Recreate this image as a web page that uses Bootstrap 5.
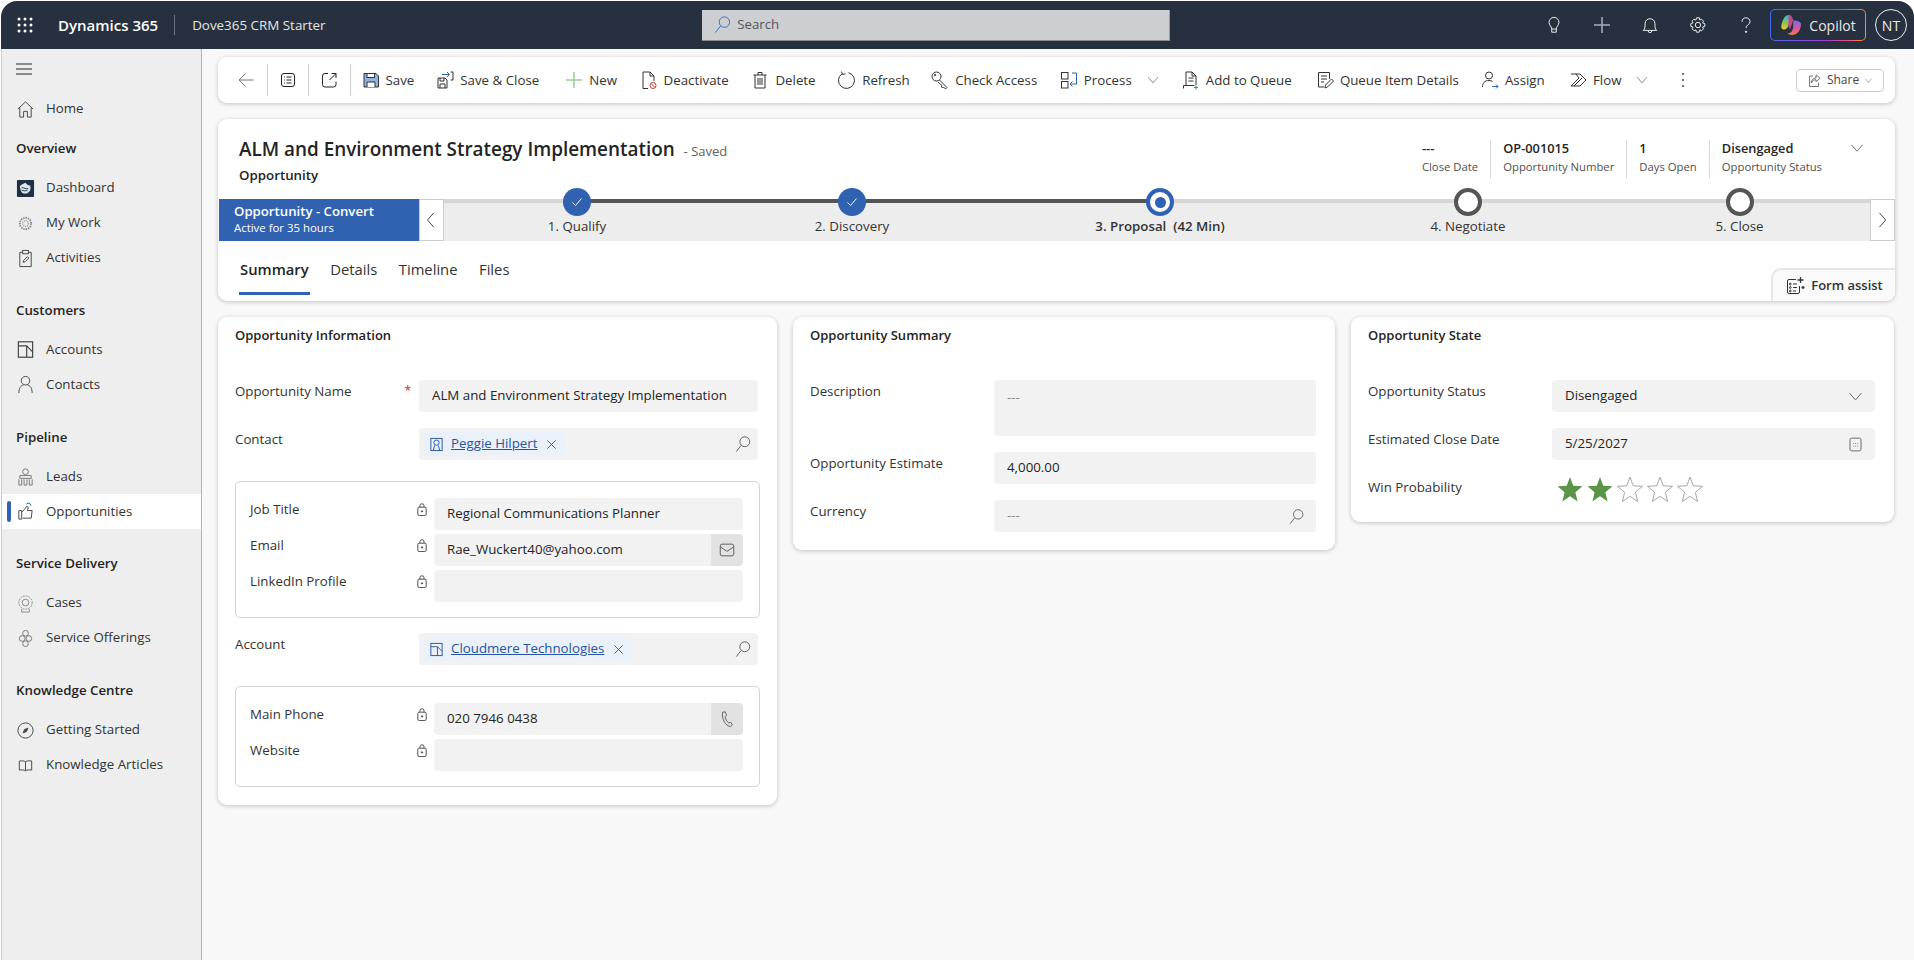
<!DOCTYPE html>
<html lang="en">
<head>
  <meta charset="UTF-8" />
  <title>Dynamics 365</title>
  <link href="https://cdn.jsdelivr.net/npm/bootstrap@5.3.0/dist/css/bootstrap.min.css" rel="stylesheet">
  <style>
    html, body { height: 100%; }
    body {
      background: #fff;
      overflow: hidden;
      font-family: "Open Sans", "Noto Sans", sans-serif;
      font-size: 13.3px;
      color: #242424;
    }
    .ic { width: 20px; height: 20px; flex: none; fill: none; stroke: currentColor; stroke-width: 1; }

    .app-win { height: 100vh; padding: 1px 0 0 1px; display: flex; flex-direction: column; }

    /* top bar */
    .top-bar {
      height: 48px; padding: 0; flex: none; flex-wrap: nowrap; justify-content: flex-start;
      background: #26303e; border-radius: 16px 16px 0 0; color: #fff;
    }
    .waffle { width: 48px; display: flex; justify-content: center; margin-right: 9px; }
    .app-name { font-size: 15px; font-weight: 600; padding-right: 16px; border-right: 1px solid #6b7480; line-height: 20px; }
    .env-name { font-size: 13.4px; color: #e6e6e6; padding-left: 17px; width: 527px; }
    .top-search {
      width: 468px; height: 31px; background: #cdced2; border-bottom: 1px solid #8a8c90; border-right: 1px solid #9a9ca0;
      color: #555; display: flex; align-items: center; gap: 5px; padding-left: 11px;
    }
    .top-search .ic { color: #3b6db5; width: 19px; height: 19px; }
    .top-icons { display: flex; margin-left: auto; align-items: center; }
    .top-icon { width: 48px; display: flex; justify-content: center; color: #fff; }
    .top-icon.dim { color: #aab0b8; }
    .top-icon .ic { width: 18px; height: 18px; }
    .copilot-btn {
      width: 96px; height: 32px; margin: 0 9px 0 0; padding: 0; border: 1px solid transparent; border-radius: 5px;
      background: linear-gradient(#26303e, #26303e) padding-box, linear-gradient(100deg, #3f6ff0, #a040d8 60%, #ee5a80 85%, #f59a2a) border-box;
      color: #e8e8e8; display: flex; align-items: center; justify-content: center; gap: 7px; font-size: 14px;
    }
    .me-circle {
      width: 32px; height: 32px; border: 1px solid #eee; border-radius: 50%; margin-right: 7px;
      display: flex; align-items: center; justify-content: center; font-size: 14px; color: #eee;
    }

    /* sidebar */
    .shell { flex: 1; display: flex; min-height: 0; }
    .side-nav { width: 201px; flex: none; background: #eee; border-left: 1px solid #ccc; border-right: 1px solid #b4b4b4; }
    .side-burger { height: 30px; margin: 5px 0 7.5px; padding-left: 14px; display: flex; align-items: center; }
    .side-item {
      height: 35px; display: flex; align-items: center; gap: 11px; padding-left: 14px; color: #333; position: relative; text-decoration: none;
    }
    .side-item .ic { width: 19px; height: 19px; color: #444; }
    .side-item.active { background: #fff; }
    .side-item.active::before {
      content: ""; position: absolute; left: 5px; top: 7px; width: 4px; height: 21px; border-radius: 2px; background: #3162b2;
    }
    .side-head { height: 35px; display: flex; align-items: center; padding-left: 14px; font-weight: 600; color: #242424; margin-bottom: 4px; }
    .side-head.gap { margin-top: 17.75px; }
    .side-head.first { margin-top: 5px; }

    /* main */
    .main-area { flex: 1; background: #f8f8f8; padding: 8px 19px 0 16px; min-width: 0; }
    .panel { border: 0; border-radius: 9px; box-shadow: 0 1px 4px rgba(0,0,0,.22); background: #fff; }
    .cmd-bar { height: 46px; display: flex; align-items: center; padding-left: 8px; margin-bottom: 16px; }
    .cmd-cell { width: 41.5px; height: 32px; display: flex; align-items: center; justify-content: center; border-right: 1px solid #ccc; }
    .cmd-btn {
      display: inline-flex; align-items: center; gap: 5px; padding: 0 10.5px; border: 0; border-radius: 0;
      font-size: 13.3px; color: #333; white-space: nowrap; line-height: 20px;
    }
    .cmd-chev { color: #555; margin-left: 9px; width: 14px; height: 14px; }
    .cmd-first { padding-left: 10px; }
    .cmd-bar > :nth-child(6) { margin-left: 4px; }
    .cmd-bar > :nth-child(7) { margin-left: .6px; }
    .cmd-bar > :nth-child(8) { margin-left: .6px; }
    .cmd-bar > :nth-child(9) { margin-left: .6px; }
    .cmd-bar > :nth-child(10) { margin-left: -.6px; }
    .cmd-bar > :nth-child(11) { margin-left: .6px; }
    .cmd-bar > :nth-child(13) { margin-left: 2.2px; }
    .cmd-bar > :nth-child(15) { margin-left: 2.2px; }
    .cmd-bar > :nth-child(16) { margin-left: 3px; }
    .share-btn {
      margin-left: auto !important; margin-right: 11px; width: 88px; height: 23px; padding: 0; border: 1px solid #ccc; border-radius: 4px;
      display: flex; align-items: center; justify-content: center; gap: 5px; font-size: 12px; color: #444;
    }

    /* record header */
    .rec-head { height: 182px; margin-bottom: 16px; overflow: hidden; }
    .rec-top { height: 80px; display: flex; justify-content: space-between; }
    .rec-title { padding: 16px 0 0 21px; }
    .rec-title h1 { font-size: 18.9px; font-weight: 600; line-height: 28px; margin: 0; }
    .rec-title h1 span { font-size: 13px; font-weight: 400; color: #616161; margin-left: 4px; }
    .rec-title div { font-weight: 600; line-height: 20px; }
    .stat-row { display: flex; padding: 21px 30px 0 0; }
    .stat-box { height: 38px; padding: 0 12px; border-left: 1px solid #d8d8d8; }
    .stat-box:first-child { border-left: 0; }
    .stat-val { font-weight: 600; font-size: 12.8px; line-height: 17px; }
    .stat-lab { font-size: 11.3px; color: #505050; line-height: 20px; }
    .stat-chev { width: 16px; height: 16px; margin: 0 0 0 15px; color: #555; }

    .bpf-band { height: 42px; display: flex; background: #ededed; margin-left: 1px; }
    .bpf-stage { width: 200px; background: #3162b2; color: #fff; padding: 3px 0 0 15px; }
    .bpf-stage b { display: block; font-weight: 600; font-size: 13.2px; line-height: 18px; }
    .bpf-stage small { display: block; font-size: 11.4px; line-height: 16px; }
    .bpf-nav { width: 25px; background: #fff; border: 1px solid #ccc; display: flex; align-items: center; justify-content: center; color: #333; flex: none; }
    .bpf-nav .ic { width: 18px; height: 18px; }
    .bpf-track { flex: 1; position: relative; display: grid; grid-template-columns: 266px 284px 332px 284px 259px; }
    .bpf-line { position: absolute; top: 0; height: 4px; background: #d6d6d6; left: 0; right: 0; }
    .bpf-line.done { left: 133px; width: 583px; right: auto; background: #555; }
    .bpf-step { position: relative; display: flex; flex-direction: column; align-items: center; margin-top: -11px; color: #333; }
    .bpf-step span { line-height: 20px; }
    .bpf-dot { width: 28px; height: 28px; border-radius: 50%; background: #fff; border: 4px solid #555; display: flex; align-items: center; justify-content: center; }
    .bpf-dot.ok { background: #3162b2; border: 0; color: #fff; }
    .bpf-dot.now { border-color: #2f62b5; }
    .bpf-dot.now::after { content: ""; width: 11px; height: 11px; border-radius: 50%; background: #2f62b5; }

    .tab-row { height: 60px; display: flex; justify-content: space-between; align-items: flex-end; }
    .tab-list { padding-left: 21px; height: 60px; gap: 19.5px; flex-wrap: nowrap; }
    .tab-list .nav-link {
      padding: 18px 1px 0; height: 54px; color: #333; font-size: 14.8px; border-bottom: 3px solid transparent; line-height: 20px; background: none; border-radius: 0;
    }
    .tab-list .nav-link.active { color: #242424; font-weight: 600; border-bottom-color: #2f62b5; }
    .assist-btn {
      width: 124px; height: 33px; padding: 0; border: 0; border-top: 2px solid #e6e6e6; border-left: 2px solid #e6e6e6; border-radius: 10px 0 0 0;
      background: #fafafa; display: flex; align-items: center; justify-content: center; gap: 6px; font-weight: 600; font-size: 13px; color: #333;
    }

    /* form cards */
    .form-cols { display: grid; grid-template-columns: 559px 542px 543px; gap: 16px; align-items: start; }
    .form-card { padding: 8px 19px 18px 17px; }
    .form-card h2 { font-size: 13px; font-weight: 600; line-height: 20px; margin: 0 0 35px; }
    .fld-row { display: grid; grid-template-columns: 184px 1fr; margin-bottom: 16px; }
    .fld-row:last-child { margin-bottom: 0; }
    .fld-label { display: flex; justify-content: space-between; padding: 1px 6px 0 0; line-height: 20px; color: #333; }
    .req-mark { color: #c4262e; font-size: 12px; padding-right: 2px; }
    .lock-ic { width: 12px; height: 13px; color: #444; margin-top: 4px; fill: none; stroke: currentColor; stroke-width: 1; }
    .fld-box {
      height: 32px; background: #f2f2f2; border: 0; border-radius: 4px; padding: 0 13px 2px; font-size: 13.3px; color: #242424;
      display: flex; align-items: center; box-shadow: none;
    }
    div.fld-box { padding-bottom: 0; }
    input.fld-box:focus { background: #f2f2f2; box-shadow: none; }
    .fld-box.tall { height: 56px; align-items: flex-start; padding-top: 8px; }
    .fld-muted { color: #8a8a8a; }
    div.fld-look { padding: 0 4px; justify-content: space-between; }
    .fld-end { color: #555; margin-left: auto; }
    .fld-end.ic { width: 17px; height: 17px; margin-right: -2px; }
    .look-chip { height: 24px; background: #ebf1fa; border-radius: 3px; display: flex; align-items: center; gap: 7px; padding: 0 8px 0 6px; color: #27549f; }
    .look-chip a { color: #27549f; }
    .look-chip .ic { width: 15px; height: 15px; }
    .look-chip .ic.x { width: 11px; height: 11px; margin-left: 2px; }
    .fld-look > .ic { margin-right: 2px; width: 18px; height: 18px; color: #555; }
    .sub-box { border: 1px solid #d4d4d4; border-radius: 5px; padding: 16px 16px 15px 14px; margin: 21px -2px 15px 0; }
    .sub-box .fld-row { margin-bottom: 4px; }
    .sub-box .fld-row:last-child { margin-bottom: 0; }
    .fld-act { padding: 0; background: #e2e2e2; border: 0; border-radius: 0 4px 4px 0; width: 32px; height: 32px; display: flex; align-items: center; justify-content: center; color: #555; }
    .fld-act .ic { width: 18px; height: 18px; }
    .input-group .fld-box { border-radius: 4px 0 0 4px; }
    .star-row { display: flex; gap: 4px; height: 24px; margin: 0 0 4px 5px; }
    .star-ic { width: 26px; height: 26px; margin-top: 0; }
  </style>
</head>
<body>

<svg width="0" height="0" style="position:absolute">
  <symbol id="i-back" viewBox="0 0 20 20"><path d="M17.5 10H3M9.5 3.5 3 10l6.5 6.5"/></symbol>
  <symbol id="i-form" viewBox="0 0 20 20"><rect x="3.5" y="3.5" width="13" height="13" rx="2.5"/><path d="M8.5 7h5M8.5 10h5M8.5 13h5M6 7h.8M6 10h.8M6 13h.8"/></symbol>
  <symbol id="i-open" viewBox="0 0 20 20"><path d="M9 3.5H6a2.5 2.5 0 0 0-2.5 2.500v8.500A2.500 2.500 0 0 0 6 17h8.500a2.500 2.500 0 0 0 2.500-2.500V11.500M12.500 3.500H17V8M17 3.500l-6.500 6.500"/></symbol>
  <symbol id="i-save" viewBox="0 0 20 20"><path d="M3 3.500h12l2.500 2.500v11H3z" fill="#8db4e2" stroke="#333"/><path d="M6 17v-5h8v5" fill="#fff" stroke="#333"/><rect x="6" y="3.500" width="7.500" height="4" fill="#fff" stroke="#333"/></symbol>
  <symbol id="i-saveclose" viewBox="0 0 20 20"><path d="M3 8h7l2 2v8H3z"/><path d="M5 18v-4h5v4M5 8v3h4V8"/><path d="M7 4.500h7M12 2l2.500 2.500L12 7" stroke="#2f62b5"/><path d="M15.500 2H18v8h-2.500"/></symbol>
  <symbol id="i-plus" viewBox="0 0 20 20"><path d="M10 2v16M2 10h16" stroke="#9ccc9c" stroke-width="1.500"/></symbol>
  <symbol id="i-deact" viewBox="0 0 20 20"><path d="M9 18.500H4V2h7l4 4v5M11 2v4h4"/><circle cx="14" cy="15.500" r="3" stroke="#c83a3a"/><path d="m12 13.500 4 4" stroke="#c83a3a"/></symbol>
  <symbol id="i-trash" viewBox="0 0 20 20"><path d="M3.500 5h13M8 5V2.500h4V5M5 5v13h10V5M8 8v7M10 8v7M12 8v7"/></symbol>
  <symbol id="i-refresh" viewBox="0 0 20 20"><path d="M11.500 2.700A8 8 0 1 1 5 3.800M4.500 1.500 5.500 4.500 8.500 3.800"/></symbol>
  <symbol id="i-key" viewBox="0 0 20 20"><circle cx="6.500" cy="6.500" r="4.500"/><path d="m9.500 10 7.500 7.500-1.500 1.500-2-2-1 1-1-1 .5-1.500-4-3.500"/><circle cx="5" cy="5" r=".8"/></symbol>
  <symbol id="i-process" viewBox="0 0 20 20"><rect x="2.500" y="2.500" width="6.500" height="6.500"/><rect x="2.500" y="11.500" width="6.500" height="6.500"/><path d="M13 3h4.500v11H11M13.500 11.500 11 14l2.500 2.500" stroke="#2f62b5"/></symbol>
  <symbol id="i-queue" viewBox="0 0 20 20"><path d="M5 15V2h6l4 4v9M11 2v4h4M7.500 8h5M7.500 11h5"/><path d="M2.500 18.500v-3h11" /><path d="M15 15.500v4M13 17.500h4" stroke="#3f9142"/></symbol>
  <symbol id="i-details" viewBox="0 0 20 20"><path d="M14.500 9V2.500H3.500V17H9M6 6h6M6 9h6M6 12h3"/><path d="m10 18 .5-3 6-6 2 2-6 6z"/></symbol>
  <symbol id="i-assign" viewBox="0 0 20 20"><circle cx="9" cy="5.500" r="3.500"/><path d="M2.500 17c0-4 2-6.500 6.500-6.500 1.500 0 2.800.5 3.500 1"/><path d="M12 16.500h6M16 14.500l2 2-2 2" stroke="#2f62b5"/></symbol>
  <symbol id="i-flow" viewBox="0 0 20 20"><path d="M3 4h9l6 6-6 6H3M3 16l8-8-3-4M6 16l8-8"/></symbol>
  <symbol id="i-chev" viewBox="0 0 20 20"><path d="m3 6 7 8 7-8"/></symbol>
  <symbol id="i-left" viewBox="0 0 20 20"><path d="M12 2 5 10l7 8"/></symbol>
  <symbol id="i-right" viewBox="0 0 20 20"><path d="m6 2 7 8-7 8"/></symbol>
  <symbol id="i-share" viewBox="0 0 20 20"><path d="M8 4H3.500v14h12v-5"/><path d="M12 2.500 17.500 7 12 11.500V9c-3 0-5 1-6 4 0-4 2.500-6.500 6-6.500z"/></symbol>
  <symbol id="i-assist" viewBox="0 0 20 20"><path d="M11 3.500H4A1.500 1.500 0 0 0 2.500 5v11A1.500 1.500 0 0 0 4 17.500h9a1.500 1.500 0 0 0 1.500-1.500v-6M8 8h4M8 11.500h4M8 15h3"/><circle cx="5.300" cy="8" r=".9"/><circle cx="5.300" cy="11.500" r=".9"/><circle cx="5.300" cy="15" r=".9"/><path d="M15.500 1v6M12.500 4h6M18 10v3M16.500 11.500h3" stroke-width="1.300"/></symbol>
  <symbol id="i-search" viewBox="0 0 20 20"><circle cx="12" cy="7.500" r="5.500"/><path d="M8 11.500 2.500 18.500"/></symbol>
  <symbol id="i-lock" viewBox="0 0 12 14"><rect x="1.500" y="4.500" width="9" height="9" rx="1.500"/><path d="M3.800 4.500V3a2.200 2.200 0 0 1 4.400 0v1.500"/><circle cx="6" cy="9" r=".7" fill="currentColor"/></symbol>
  <symbol id="i-mail" viewBox="0 0 20 20"><rect x="2.500" y="3.500" width="15" height="13" rx="2"/><path d="m2.500 6.500 7.500 5 7.500-5"/></symbol>
  <symbol id="i-phone" viewBox="0 0 20 20"><path d="M5 2.500 8 2l1.500 4L8 7.500c.3 2.500 1.500 5 4 7l2-1 2 3-2 2c-6-1-10-8.500-9-16z"/></symbol>
  <symbol id="i-x" viewBox="0 0 12 12"><path d="m1.500 1.500 9 9M10.500 1.500l-9 9"/></symbol>
  <symbol id="i-contact" viewBox="0 0 16 16"><rect x="2" y="1.500" width="12" height="13"/><circle cx="8" cy="6" r="2.800"/><path d="M4.500 14.500 6 9M11.500 14.500 10 9"/></symbol>
  <symbol id="i-acct" viewBox="0 0 16 16"><rect x="2" y="1.500" width="12" height="13"/><path d="M2 5h7v9.500M9 5l5 5"/></symbol>
  <symbol id="i-cal" viewBox="0 0 20 20"><rect x="3.500" y="2.500" width="13" height="15" rx="2"/><path d="M7.500 8.500v.8M10 8.500v.8M12.500 8.500v.8M7.500 11.500v.8M10 11.500v.8M12.500 11.500v.8"/></symbol>
  <symbol id="i-home" viewBox="0 0 20 20"><path d="M2 9.500 10 2l8 7.500M4 8v10h4v-6h4v6h4V8"/></symbol>
  <symbol id="i-dash" viewBox="0 0 20 20"><rect x="1" y="1" width="18" height="18" rx="1" fill="#1f3044" stroke="none"/><path d="M4 8c2-3 5-3 6-4l2 2 3 1c1 3 0 6-3 8-3 1-6 0-7-3z" fill="#dfe5ea" stroke="none"/><path d="M6 9c2 0 5 2 7 1M6 12c2 0 4 1 6 0" stroke="#1f3044"/></symbol>
  <symbol id="i-mywork" viewBox="0 0 20 20"><circle cx="10" cy="10" r="6" stroke-dasharray="1.500 1" stroke="#888" stroke-width="2"/><circle cx="10" cy="10" r="3" stroke-dasharray="1 1" stroke="#999" stroke-width="1.500"/><path d="M4 2.500h.1M7 1.500h.1M13 2h.1" stroke="#777" stroke-width="1.500"/></symbol>
  <symbol id="i-activity" viewBox="0 0 20 20"><path d="M7 3.500H4v15h12v-15h-3"/><rect x="7" y="1.500" width="6" height="3.500"/><path d="m7.500 14 .5-2 4-4 1.500 1.500-4 4z"/></symbol>
  <symbol id="i-person" viewBox="0 0 20 20"><circle cx="10" cy="6" r="4.500"/><path d="M3 19c0-5 2-8 5-8.500M17 19c0-5-2-8-5-8.500"/></symbol>
  <symbol id="i-leads" viewBox="0 0 20 20"><circle cx="10" cy="5" r="3" stroke="#777"/><path d="M4 9h12v3H4zM3 13v6h3v-6M8.500 13v6h3v-6M14 13v6h3v-6" stroke="#777"/></symbol>
  <symbol id="i-opps" viewBox="0 0 20 20"><path d="M3 9h3v9H3zM6 10.500c2-1 4-4 5-6l2 1-1 3.500h5l-1 8H7"/><path d="m11 2 3-1 2 3" stroke="#2f62b5"/></symbol>
  <symbol id="i-cases" viewBox="0 0 20 20"><circle cx="10" cy="9" r="7" stroke="#888" stroke-dasharray="2 1"/><circle cx="10" cy="9" r="3.500" stroke="#888"/><path d="M6 16v3h8v-3" stroke="#888"/></symbol>
  <symbol id="i-offer" viewBox="0 0 20 20"><circle cx="10" cy="4.500" r="3" stroke="#777"/><circle cx="10" cy="15.500" r="3" stroke="#777"/><circle cx="6.500" cy="10" r="3" stroke="#777"/><circle cx="13.500" cy="10" r="3" stroke="#777"/></symbol>
  <symbol id="i-compass" viewBox="0 0 20 20"><circle cx="10" cy="10" r="8"/><path d="m7.500 12.500 1.500-3.500 3.500-1.500-1.500 3.500z" fill="currentColor"/></symbol>
  <symbol id="i-book" viewBox="0 0 20 20"><path d="M10 6C8.500 5 6 5 3.500 5.300v9.500C6 14.500 8.500 14.500 10 15.500c1.500-1 4-1 6.500-.7V5.300C14 5 11.500 5 10 6zM10 6v9.500"/></symbol>
  <symbol id="i-bulb" viewBox="0 0 20 20"><path d="M7.500 14.500C7.500 11.500 4.500 10.500 4.500 7a5.500 5.500 0 0 1 11 0c0 3.500-3 4.500-3 7.500zM7.500 14.500V18h5v-3.500"/></symbol>
  <symbol id="i-bell" viewBox="0 0 20 20"><path d="M2.500 16h15c-2-1.500-2-3.500-2-7.500a5.500 5.500 0 0 0-11 0c0 4 0 6-2 7.500zM8 16.500a2 2 0 0 0 4 0"/></symbol>
  <symbol id="i-gear" viewBox="0 0 20 20"><circle cx="10" cy="10" r="3"/><path d="M8.500 2h3l.5 2.500 2-.9 2.100 2.100-1 2 2.500.8v3l-2.500.7 1 2.100-2.100 2.100-2-1-.7 2.600h-3l-.7-2.600-2 1-2.100-2.100 1-2.100L2 11.500v-3l2.400-.8-1-2 2.100-2.100 2.100.9z"/></symbol>
  <symbol id="i-help" viewBox="0 0 20 20"><path d="M5.500 6.500C5.500 3.500 7.500 2 10 2s4.500 1.800 4.500 4.300c0 3.200-4.500 3.700-4.500 7.200"/><circle cx="10" cy="17.500" r=".7" fill="currentColor"/></symbol>
</svg>

<div class="app-win">
  <nav class="navbar top-bar">
    <div class="waffle">
      <svg width="16" height="16" viewBox="0 0 16 16" fill="#fff"><circle cx="2" cy="2" r="1.500"/><circle cx="8" cy="2" r="1.500"/><circle cx="14" cy="2" r="1.500"/><circle cx="2" cy="8" r="1.500"/><circle cx="8" cy="8" r="1.500"/><circle cx="14" cy="8" r="1.500"/><circle cx="2" cy="14" r="1.500"/><circle cx="8" cy="14" r="1.500"/><circle cx="14" cy="14" r="1.500"/></svg>
    </div>
    <span class="app-name">Dynamics 365</span>
    <span class="env-name">Dove365 CRM Starter</span>
    <div class="top-search"><svg class="ic"><use href="#i-search"/></svg><span>Search</span></div>
    <div class="top-icons">
      <span class="top-icon"><svg class="ic"><use href="#i-bulb"/></svg></span>
      <span class="top-icon dim"><svg class="ic"><path d="M9 1v16M1 9h16" stroke-width="1.500"/></svg></span>
      <span class="top-icon"><svg class="ic"><use href="#i-bell"/></svg></span>
      <span class="top-icon"><svg class="ic"><use href="#i-gear"/></svg></span>
      <span class="top-icon"><svg class="ic"><use href="#i-help"/></svg></span>
      <button class="btn copilot-btn">
        <svg width="22" height="22" viewBox="0 0 20 20">
          <defs>
            <linearGradient id="cp1" x1="0" y1="0" x2="0" y2="1"><stop offset="0" stop-color="#38b6e8"/><stop offset=".5" stop-color="#7fc94f"/><stop offset="1" stop-color="#f4c430"/></linearGradient>
            <linearGradient id="cp2" x1="0" y1="0" x2="0" y2="1"><stop offset="0" stop-color="#7a6ae8"/><stop offset=".6" stop-color="#e0559a"/><stop offset="1" stop-color="#f0803c"/></linearGradient>
          </defs>
          <path d="M8 1c-3 0-5 3-6.500 8-1 3 0 5 2 5 2.500 0 3.500-1.500 4.500-5z" fill="url(#cp1)"/>
          <path d="M12 6c2.500-.5 6 .5 7 2.500.5 3-1.500 9-5 10-3 1-6 .5-7-1 3 0 4-1.500 5-5z" fill="url(#cp2)"/>
          <path d="M8 1c2 0 3 1 4 5L9 14 7 9z" fill="#e0559a" opacity=".8"/>
        </svg>
        <span>Copilot</span>
      </button>
      <span class="me-circle">NT</span>
    </div>
  </nav>

  <div class="shell">
    <aside class="side-nav">
      <div class="side-burger"><svg class="ic" style="width:16px;height:12px" viewBox="0 0 16 12"><path d="M0 1h16M0 6h16M0 11h16"/></svg></div>
      <a class="side-item"><svg class="ic"><use href="#i-home"/></svg>Home</a>
      <div class="side-head first">Overview</div>
      <a class="side-item"><svg class="ic"><use href="#i-dash"/></svg>Dashboard</a>
      <a class="side-item"><svg class="ic"><use href="#i-mywork"/></svg>My Work</a>
      <a class="side-item"><svg class="ic"><use href="#i-activity"/></svg>Activities</a>
      <div class="side-head gap">Customers</div>
      <a class="side-item"><svg class="ic"><use href="#i-acct"/></svg>Accounts</a>
      <a class="side-item"><svg class="ic"><use href="#i-person"/></svg>Contacts</a>
      <div class="side-head gap">Pipeline</div>
      <a class="side-item"><svg class="ic"><use href="#i-leads"/></svg>Leads</a>
      <a class="side-item active"><svg class="ic"><use href="#i-opps"/></svg>Opportunities</a>
      <div class="side-head gap">Service Delivery</div>
      <a class="side-item"><svg class="ic"><use href="#i-cases"/></svg>Cases</a>
      <a class="side-item"><svg class="ic"><use href="#i-offer"/></svg>Service Offerings</a>
      <div class="side-head gap">Knowledge Centre</div>
      <a class="side-item"><svg class="ic"><use href="#i-compass"/></svg>Getting Started</a>
      <a class="side-item"><svg class="ic"><use href="#i-book"/></svg>Knowledge Articles</a>
    </aside>

    <main class="main-area">
      <div class="panel cmd-bar">
        <span class="cmd-cell"><svg class="ic" style="color:#777"><use href="#i-back"/></svg></span>
        <span class="cmd-cell"><svg class="ic"><use href="#i-form"/></svg></span>
        <span class="cmd-cell"><svg class="ic"><use href="#i-open"/></svg></span>
        <button class="btn cmd-btn cmd-first"><svg class="ic"><use href="#i-save"/></svg>Save</button>
        <button class="btn cmd-btn"><svg class="ic"><use href="#i-saveclose"/></svg>Save &amp; Close</button>
        <button class="btn cmd-btn"><svg class="ic"><use href="#i-plus"/></svg>New</button>
        <button class="btn cmd-btn"><svg class="ic"><use href="#i-deact"/></svg>Deactivate</button>
        <button class="btn cmd-btn"><svg class="ic"><use href="#i-trash"/></svg>Delete</button>
        <button class="btn cmd-btn"><svg class="ic"><use href="#i-refresh"/></svg>Refresh</button>
        <button class="btn cmd-btn"><svg class="ic"><use href="#i-key"/></svg>Check Access</button>
        <button class="btn cmd-btn"><svg class="ic"><use href="#i-process"/></svg>Process<svg class="ic cmd-chev"><use href="#i-chev"/></svg></button>
        <button class="btn cmd-btn"><svg class="ic"><use href="#i-queue"/></svg>Add to Queue</button>
        <button class="btn cmd-btn"><svg class="ic"><use href="#i-details"/></svg>Queue Item Details</button>
        <button class="btn cmd-btn"><svg class="ic"><use href="#i-assign"/></svg>Assign</button>
        <button class="btn cmd-btn"><svg class="ic"><use href="#i-flow"/></svg>Flow<svg class="ic cmd-chev"><use href="#i-chev"/></svg></button>
        <button class="btn cmd-btn"><svg width="4" height="16" viewBox="0 0 4 16" fill="#444" style="margin:0 8px"><circle cx="2" cy="2" r="1"/><circle cx="2" cy="8" r="1"/><circle cx="2" cy="14" r="1"/></svg></button>
        <button class="btn share-btn"><svg class="ic" style="width:15px;height:15px"><use href="#i-share"/></svg>Share<svg class="ic" style="width:9px;height:9px"><use href="#i-chev"/></svg></button>
      </div>

      <section class="panel rec-head">
        <div class="rec-top">
          <div class="rec-title">
            <h1>ALM and Environment Strategy Implementation <span>- Saved</span></h1>
            <div>Opportunity</div>
          </div>
          <div class="stat-row">
            <div class="stat-box"><div class="stat-val">---</div><div class="stat-lab">Close Date</div></div>
            <div class="stat-box"><div class="stat-val">OP-001015</div><div class="stat-lab">Opportunity Number</div></div>
            <div class="stat-box"><div class="stat-val">1</div><div class="stat-lab">Days Open</div></div>
            <div class="stat-box"><div class="stat-val">Disengaged</div><div class="stat-lab">Opportunity Status</div></div>
            <svg class="ic stat-chev"><use href="#i-chev"/></svg>
          </div>
        </div>
        <div class="bpf-band">
          <div class="bpf-stage"><b>Opportunity - Convert</b><small>Active for 35 hours</small></div>
          <div class="bpf-nav"><svg class="ic"><use href="#i-left"/></svg></div>
          <div class="bpf-track">
            <div class="bpf-line"></div>
            <div class="bpf-line done"></div>
            <div class="bpf-step"><div class="bpf-dot ok"><svg width="12" height="12" viewBox="0 0 12 12" fill="none" stroke="#fff"><path d="m1.500 6.500 3 3 6-7"/></svg></div><span>1. Qualify</span></div>
            <div class="bpf-step"><div class="bpf-dot ok"><svg width="12" height="12" viewBox="0 0 12 12" fill="none" stroke="#fff"><path d="m1.500 6.500 3 3 6-7"/></svg></div><span>2. Discovery</span></div>
            <div class="bpf-step"><div class="bpf-dot now"></div><span class="fw-semibold">3. Proposal&nbsp; (42 Min)</span></div>
            <div class="bpf-step"><div class="bpf-dot"></div><span>4. Negotiate</span></div>
            <div class="bpf-step"><div class="bpf-dot"></div><span>5. Close</span></div>
          </div>
          <div class="bpf-nav"><svg class="ic"><use href="#i-right"/></svg></div>
        </div>
        <div class="tab-row">
          <ul class="nav tab-list">
            <li class="nav-item"><a class="nav-link active">Summary</a></li>
            <li class="nav-item"><a class="nav-link">Details</a></li>
            <li class="nav-item"><a class="nav-link">Timeline</a></li>
            <li class="nav-item"><a class="nav-link">Files</a></li>
          </ul>
          <button class="btn assist-btn"><svg class="ic"><use href="#i-assist"/></svg>Form assist</button>
        </div>
      </section>

      <div class="form-cols">
        <section class="card panel form-card">
          <h2>Opportunity Information</h2>
          <div class="fld-row">
            <label class="fld-label">Opportunity Name<span class="req-mark">*</span></label>
            <input class="form-control fld-box" readonly value="ALM and Environment Strategy Implementation">
          </div>
          <div class="fld-row mb-0">
            <label class="fld-label">Contact</label>
            <div class="fld-box fld-look">
              <span class="look-chip"><svg class="ic"><use href="#i-contact"/></svg><a href="#">Peggie Hilpert</a><svg class="ic x"><use href="#i-x"/></svg></span>
              <svg class="ic"><use href="#i-search"/></svg>
            </div>
          </div>
          <div class="sub-box">
            <div class="fld-row">
              <label class="fld-label">Job Title<svg class="lock-ic"><use href="#i-lock"/></svg></label>
              <input class="form-control fld-box" readonly value="Regional Communications Planner">
            </div>
            <div class="fld-row">
              <label class="fld-label">Email<svg class="lock-ic"><use href="#i-lock"/></svg></label>
              <div class="input-group">
                <input class="form-control fld-box" readonly value="Rae_Wuckert40@yahoo.com">
                <button class="btn fld-act"><svg class="ic"><use href="#i-mail"/></svg></button>
              </div>
            </div>
            <div class="fld-row">
              <label class="fld-label">LinkedIn Profile<svg class="lock-ic"><use href="#i-lock"/></svg></label>
              <input class="form-control fld-box" readonly value="">
            </div>
          </div>
          <div class="fld-row mb-0">
            <label class="fld-label">Account</label>
            <div class="fld-box fld-look">
              <span class="look-chip"><svg class="ic"><use href="#i-acct"/></svg><a href="#">Cloudmere Technologies</a><svg class="ic x"><use href="#i-x"/></svg></span>
              <svg class="ic"><use href="#i-search"/></svg>
            </div>
          </div>
          <div class="sub-box mb-0">
            <div class="fld-row">
              <label class="fld-label">Main Phone<svg class="lock-ic"><use href="#i-lock"/></svg></label>
              <div class="input-group">
                <input class="form-control fld-box" readonly value="020 7946 0438">
                <button class="btn fld-act"><svg class="ic"><use href="#i-phone"/></svg></button>
              </div>
            </div>
            <div class="fld-row">
              <label class="fld-label">Website<svg class="lock-ic"><use href="#i-lock"/></svg></label>
              <input class="form-control fld-box" readonly value="">
            </div>
          </div>
        </section>

        <section class="card panel form-card">
          <h2>Opportunity Summary</h2>
          <div class="fld-row">
            <label class="fld-label">Description</label>
            <div class="fld-box tall fld-muted">---</div>
          </div>
          <div class="fld-row">
            <label class="fld-label">Opportunity Estimate</label>
            <input class="form-control fld-box" readonly value="4,000.00">
          </div>
          <div class="fld-row">
            <label class="fld-label">Currency</label>
            <div class="fld-box fld-muted">---<svg class="ic fld-end"><use href="#i-search"/></svg></div>
          </div>
        </section>

        <section class="card panel form-card">
          <h2>Opportunity State</h2>
          <div class="fld-row">
            <label class="fld-label">Opportunity Status</label>
            <div class="fld-box">Disengaged<svg class="ic fld-end"><use href="#i-chev"/></svg></div>
          </div>
          <div class="fld-row">
            <label class="fld-label">Estimated Close Date</label>
            <div class="fld-box">5/25/2027<svg class="ic fld-end"><use href="#i-cal"/></svg></div>
          </div>
          <div class="fld-row">
            <label class="fld-label">Win Probability</label>
            <div class="star-row">
              <svg class="star-ic" viewBox="0 0 24 24"><polygon points="12,1 15,9 23.500,9.500 17,15 19,23.500 12,18.800 5,23.500 7,15 .5,9.500 9,9" fill="#5a9447"/></svg>
              <svg class="star-ic" viewBox="0 0 24 24"><polygon points="12,1 15,9 23.500,9.500 17,15 19,23.500 12,18.800 5,23.500 7,15 .5,9.500 9,9" fill="#5a9447"/></svg>
              <svg class="star-ic" viewBox="0 0 24 24"><polygon points="12,1 15,9 23.500,9.500 17,15 19,23.500 12,18.800 5,23.500 7,15 .5,9.500 9,9" fill="#fff" stroke="#999" stroke-width=".8"/></svg>
              <svg class="star-ic" viewBox="0 0 24 24"><polygon points="12,1 15,9 23.500,9.500 17,15 19,23.500 12,18.800 5,23.500 7,15 .5,9.500 9,9" fill="#fff" stroke="#999" stroke-width=".8"/></svg>
              <svg class="star-ic" viewBox="0 0 24 24"><polygon points="12,1 15,9 23.500,9.500 17,15 19,23.500 12,18.800 5,23.500 7,15 .5,9.500 9,9" fill="#fff" stroke="#999" stroke-width=".8"/></svg>
            </div>
          </div>
        </section>
      </div>
    </main>
  </div>
</div>

<script src="https://cdn.jsdelivr.net/npm/bootstrap@5.3.0/dist/js/bootstrap.bundle.min.js"></script>
</body>
</html>
